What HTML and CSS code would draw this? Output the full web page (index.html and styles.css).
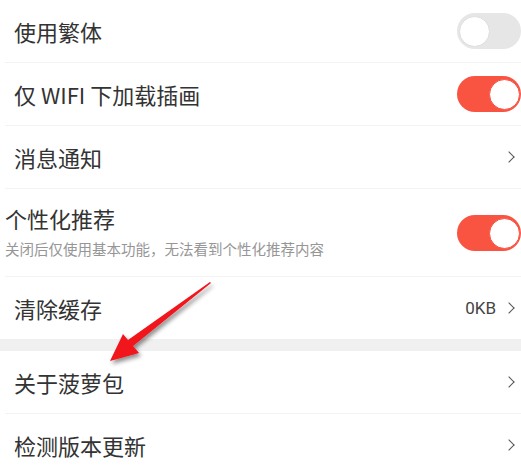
FILE: index.html
```html
<!DOCTYPE html>
<html lang="zh-CN">

<head>
    <meta charset="UTF-8">
    <meta name="viewport" content="width=device-width, initial-scale=1.0">
    <title>设置</title>
    <link rel="stylesheet" href="styles.css">
</head>

<body>
    <div class="settings">
        <div class="group">
            <div class="item">
                <span class="title">使用繁体</span>
                <span class="switch"></span>
            </div>
            <div class="item">
                <span class="title">仅 WIFI 下加载插画</span>
                <span class="switch on"></span>
            </div>
            <div class="item">
                <span class="title">消息通知</span>
                <span class="more"></span>
            </div>
            <div class="item tall">
                <div class="text">
                    <span class="title">个性化推荐</span>
                    <span class="desc">关闭后仅使用基本功能，无法看到个性化推荐内容</span>
                </div>
                <span class="switch on"></span>
            </div>
            <div class="item last">
                <span class="title">清除缓存</span>
                <span class="value">0KB<span class="more"></span></span>
            </div>
        </div>
        <div class="gap"></div>
        <div class="group">
            <div class="item">
                <span class="title">关于菠萝包</span>
                <span class="more"></span>
            </div>
            <div class="item last">
                <span class="title">检测版本更新</span>
                <span class="more"></span>
            </div>
        </div>
    </div>

    <!-- стрілка-підказка поверх списку -->
    <svg class="pointer" width="521" height="474" viewBox="0 0 521 474">
        <defs>
            <filter id="shade" x="-20%" y="-20%" width="140%" height="140%">
                <feDropShadow dx="2" dy="3" stdDeviation="2" flood-color="#000" flood-opacity="0.45" />
            </filter>
        </defs>
        <path d="M211 283 L133 346 L139 353 L110 361 L123 334 L128 340 L210 282 Z" fill="#f0141c" filter="url(#shade)" />
    </svg>
</body>

</html>
```

FILE: styles.css
```css
body {
    margin: 0;
    background: #fff;
    font-family: "Noto Sans CJK SC", "Noto Sans", sans-serif;
    color: #333;
    overflow: hidden;
}

.settings {
    width: 521px;
}

.group {
    padding-left: 5px;
}

.item {
    display: flex;
    align-items: center;
    justify-content: space-between;
    height: 62px;
    padding-left: 9px;
    border-bottom: 1px solid #f3f3f3;
}

.item.last {
    border-bottom: none;
}

.item.tall {
    height: 87px;
    padding-left: 0;
}

.title {
    font-size: 22px;
    line-height: 30px;
}

.text {
    display: flex;
    flex-direction: column;
    gap: 6px;
    margin-top: -4px;
}

.desc {
    font-size: 14.5px;
    line-height: 20px;
    color: #969696;
}

.switch {
    position: relative;
    width: 64px;
    height: 36px;
    border-radius: 18px;
    background: #e6e6e6;
    flex-shrink: 0;
}

.switch::after {
    content: "";
    position: absolute;
    top: 3px;
    left: 2px;
    width: 29px;
    height: 29px;
    border-radius: 50%;
    background: #fff;
    border: 1px solid #dedede;
}

.switch.on {
    background: #f95342;
}

.switch.on::after {
    left: 32px;
    border-color: #f95342;
}

.value {
    display: flex;
    align-items: center;
    font-family: Roboto, sans-serif;
    font-size: 17px;
    color: #444;
}

.more {
    width: 7px;
    height: 7px;
    margin: 0 8px 0 10px;
    border-top: 1.5px solid #555;
    border-right: 1.5px solid #555;
    transform: rotate(45deg);
}

.value .more {
    margin-left: 9px;
}

.gap {
    height: 12px;
    background: #f0f0f0;
}

.pointer {
    position: absolute;
    top: 0;
    left: 0;
    pointer-events: none;
}
```
